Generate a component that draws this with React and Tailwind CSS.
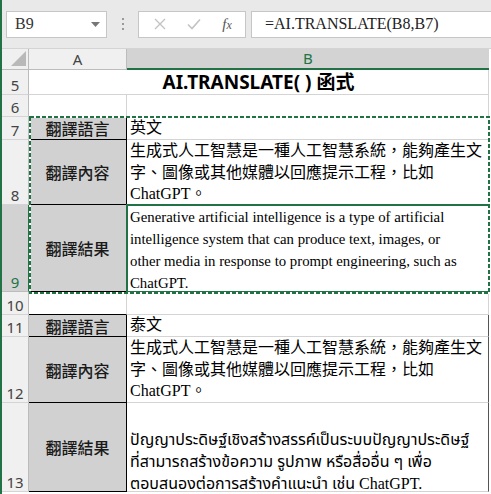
const SERIF = "font-['Liberation_Serif','Noto_Sans_CJK_TC',serif]";

function FormulaBar() {
  return (
    <div className="flex h-[49px] shrink-0 items-center border-b border-[#d4d4d4] bg-[#e9e9e9]">
      {/* name box */}
      <div className="ml-[4px] flex h-[27px] w-[101px] items-center justify-between border border-[#c6c6c6] bg-white pl-[8px] pr-[6px]">
        <span className={`${SERIF} text-[16px] leading-none text-[#333]`}>B9</span>
        <svg width="9" height="5" viewBox="0 0 9 5">
          <polygon points="0,0 9,0 4.5,5" fill="#777" />
        </svg>
      </div>
      <div className="flex w-[31px] flex-col items-center gap-[3px]">
        <span className="h-[2px] w-[2px] bg-[#9a9a9a]" />
        <span className="h-[2px] w-[2px] bg-[#9a9a9a]" />
        <span className="h-[2px] w-[2px] bg-[#9a9a9a]" />
      </div>
      {/* cancel / enter / fx */}
      <div className="flex h-[27px] w-[108px] items-center border border-[#c6c6c6] bg-white">
        <div className="flex w-[40px] justify-center pl-[2px]">
          <svg width="12" height="12" viewBox="0 0 12 12">
            <path d="M1 1 L11 11 M11 1 L1 11" stroke="#c3c3c3" strokeWidth="1.4" />
          </svg>
        </div>
        <div className="flex w-[30px] justify-center">
          <svg width="14" height="12" viewBox="0 0 14 12">
            <path d="M1 6.5 L5 10.5 L13 1.5" stroke="#c3c3c3" strokeWidth="1.6" fill="none" />
          </svg>
        </div>
        <div className="flex w-[36px] justify-center">
          <span className="font-['Liberation_Serif',serif] text-[15px] italic leading-none text-[#555]">
            f<span className="text-[12px]">x</span>
          </span>
        </div>
      </div>
      <div className="ml-[5px] flex h-[27px] flex-1 items-center border border-r-0 border-[#c6c6c6] bg-white pl-[13px]">
        <span className={`${SERIF} whitespace-nowrap text-[16px] leading-none text-[#222]`}>
          =AI.TRANSLATE(B8,B7)
        </span>
      </div>
    </div>
  );
}

function RowHead({ n, active }) {
  return (
    <div
      className={`flex items-end justify-center border-b border-r pb-[1px] font-['Noto_Sans',sans-serif] text-[15px] leading-none ${
        active
          ? "border-b-[#bcbcbc] border-r-[#217346] bg-[#d2d2d2] text-[#217346]"
          : "border-b-[#d4d4d4] border-r-[#bcbcbc] bg-[#f0f0f0] text-[#444]"
      }`}
    >
      {n}
    </div>
  );
}

function Label({ children, top }) {
  return (
    <div
      className={`flex items-center justify-center border-b border-r border-black bg-[#d1d1d1] font-['Noto_Sans_CJK_TC',sans-serif] text-[16px] font-medium leading-none text-[#1a1a1a] ${
        top ? "border-t" : ""
      }`}
    >
      {children}
    </div>
  );
}

function Lines({ lines, className = "" }) {
  return (
    <div className={`flex flex-col px-[3px] leading-[21.6px] text-black ${className}`}>
      {lines.map((l) => (
        <span key={l} className="whitespace-nowrap">
          {l}
        </span>
      ))}
    </div>
  );
}

const ZH = [
  "生成式人工智慧是一種人工智慧系統，能夠產生文",
  "字、圖像或其他媒體以回應提示工程，比如",
  "ChatGPT。",
];

const EN = [
  "Generative artificial intelligence is a type of artificial",
  "intelligence system that can produce text, images, or",
  "other media in response to prompt engineering, such as",
  "ChatGPT.",
];

const TH = [
  "ปัญญาประดิษฐ์เชิงสร้างสรรค์เป็นระบบปัญญาประดิษฐ์",
  "ที่สามารถสร้างข้อความ รูปภาพ หรือสื่ออื่น ๆ เพื่อ",
  "ตอบสนองต่อการสร้างคำแนะนำ เช่น ChatGPT.",
];

export default function App() {
  return (
    <div className="relative flex h-[494px] w-[491px] overflow-hidden bg-white">
      <div className="w-[2px] shrink-0 bg-[#217346]" />
      <div className="flex flex-1 flex-col">
        <FormulaBar />

        <div className="grid grid-cols-[27px_98px_362px] grid-rows-[21px_25px_22px_23px_65px_87px_23px_22px_66px_89px]">
          {/* column headers */}
          <div className="flex items-end justify-end border-b border-r border-[#bcbcbc] bg-[#f0f0f0] pb-[3px] pr-[2px]">
            <svg width="15" height="15" viewBox="0 0 15 15">
              <polygon points="15,0 15,15 0,15" fill="#b9b9b9" />
            </svg>
          </div>
          <div className="flex items-center justify-center border-b border-r border-[#bcbcbc] bg-[#f0f0f0] font-['Noto_Sans',sans-serif] text-[15px] leading-none text-[#444]">
            A
          </div>
          <div className="flex items-center justify-center border-b-2 border-b-[#217346] bg-[#d3d3d3] font-['Noto_Sans',sans-serif] text-[15px] leading-none text-[#217346]">
            B
          </div>

          {/* row 5 */}
          <RowHead n={5} />
          <div className="col-span-2 flex items-center justify-center border-b border-r border-[#d4d4d4] font-['Noto_Sans','Noto_Sans_CJK_TC',sans-serif] text-[19px] font-bold leading-none text-black">
            AI.TRANSLATE( ) 函式
          </div>

          {/* row 6 */}
          <RowHead n={6} />
          <div className="border-b border-r border-[#d4d4d4]" />
          <div className="border-b border-r border-[#d4d4d4]" />

          {/* row 7 */}
          <RowHead n={7} />
          <Label>翻譯語言</Label>
          <div className={`${SERIF} flex items-end border-b border-[#d4d4d4]`}>
            <Lines lines={["英文"]} className="text-[16px]" />
          </div>

          {/* row 8 */}
          <RowHead n={8} />
          <Label>翻譯內容</Label>
          <div className={`${SERIF} border-b border-[#d4d4d4]`}>
            <Lines lines={ZH} className="text-[16px]" />
          </div>

          {/* row 9 */}
          <RowHead n={9} active />
          <Label>翻譯結果</Label>
          <div className={`${SERIF} pt-[1px]`}>
            <Lines lines={EN} className="text-[14.8px] leading-[22px] text-[#111]" />
          </div>

          {/* row 10 */}
          <RowHead n={10} />
          <div className="border-b border-r border-[#d4d4d4] border-b-black" />
          <div className="border-b border-r border-[#d4d4d4]" />

          {/* row 11 */}
          <RowHead n={11} />
          <Label>翻譯語言</Label>
          <div className={`${SERIF} flex items-end border-b border-r border-[#d4d4d4] border-r-[#555]`}>
            <Lines lines={["泰文"]} className="text-[16px]" />
          </div>

          {/* row 12 */}
          <RowHead n={12} />
          <Label>翻譯內容</Label>
          <div className={`${SERIF} border-b border-r border-[#d4d4d4] border-r-[#555]`}>
            <Lines lines={ZH} className="text-[16px]" />
          </div>

          {/* row 13 */}
          <RowHead n={13} />
          <Label>翻譯結果</Label>
          <div className="flex items-end border-b border-r border-[#d4d4d4] border-r-[#555] font-['Liberation_Serif','Noto_Sans_Thai','Noto_Serif_Thai','Tlwg_Typo','Garuda','DejaVu_Sans',serif]">
            <Lines lines={TH} className="translate-y-[4px] text-[16px] leading-[22px]" />
          </div>
        </div>
      </div>

      {/* active cell B9 */}
      <div className="pointer-events-none absolute left-[126px] top-[204px] h-[89px] w-[364px] border-2 border-[#217346]" />

      {/* copy marquee around A7:B9 */}
      <svg
        className="pointer-events-none absolute left-[29px] top-[116px]"
        width="462"
        height="178"
        viewBox="0 0 462 178"
      >
        <rect x="1" y="1" width="459" height="176" fill="none" stroke="#ffffff" strokeWidth="2" />
        <rect x="1" y="1" width="459" height="176" fill="none" stroke="#217346" strokeWidth="2" strokeDasharray="4 2" />
      </svg>
    </div>
  );
}
